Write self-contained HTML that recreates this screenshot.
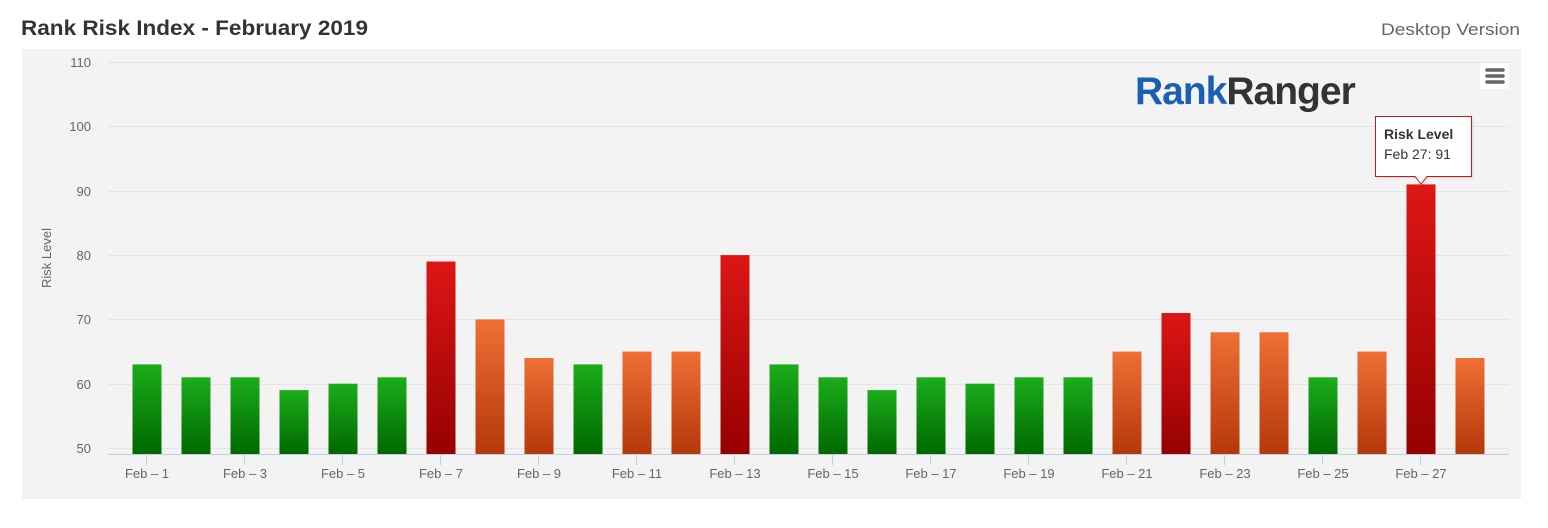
<!DOCTYPE html>
<html><head><meta charset="utf-8"><style>
body{margin:0;background:#fff;width:1548px;height:523px;overflow:hidden;font-family:"Liberation Sans",sans-serif}
</style></head><body>
<svg width="1548" height="523" xmlns="http://www.w3.org/2000/svg" font-family="Liberation Sans, sans-serif">
<defs>
<linearGradient id="g" x1="0" y1="0" x2="0" y2="1"><stop offset="0" stop-color="#1bad1b"/><stop offset="1" stop-color="#006800"/></linearGradient>
<linearGradient id="o" x1="0" y1="0" x2="0" y2="1"><stop offset="0" stop-color="#ef6f35"/><stop offset="1" stop-color="#b5380a"/></linearGradient>
<linearGradient id="r" x1="0" y1="0" x2="0" y2="1"><stop offset="0" stop-color="#de1616"/><stop offset="1" stop-color="#960000"/></linearGradient>
</defs>
<text x="21" y="35" font-size="21" font-weight="bold" fill="#333" textLength="347" lengthAdjust="spacingAndGlyphs">Rank Risk Index - February 2019</text>
<text x="1381" y="35" font-size="17" fill="#666" textLength="139" lengthAdjust="spacingAndGlyphs">Desktop Version</text>
<rect x="22" y="49" width="1499" height="450" fill="#f3f3f3"/>
<g stroke="#e4e4e4" stroke-width="1">
<line x1="108" x2="1509" y1="62.5" y2="62.5"/><line x1="108" x2="1509" y1="126.5" y2="126.5"/>
<line x1="108" x2="1509" y1="191.5" y2="191.5"/><line x1="108" x2="1509" y1="255.5" y2="255.5"/>
<line x1="108" x2="1509" y1="319.5" y2="319.5"/><line x1="108" x2="1509" y1="384.5" y2="384.5"/>
<line x1="108" x2="1509" y1="448.5" y2="448.5"/>
</g>
<g font-size="13" fill="#666" text-anchor="end">
<text x="91" y="67">110</text><text x="91" y="131">100</text><text x="91" y="196">90</text>
<text x="91" y="260">80</text><text x="91" y="324">70</text><text x="91" y="389">60</text><text x="91" y="453">50</text>
</g>
<text transform="translate(51,258) rotate(-90)" font-size="13" fill="#666" text-anchor="middle">Risk Level</text>
<g>
<rect x="132.5" y="364.4" width="29" height="89.6" fill="url(#g)"/>
<rect x="181.5" y="377.3" width="29" height="76.7" fill="url(#g)"/>
<rect x="230.5" y="377.3" width="29" height="76.7" fill="url(#g)"/>
<rect x="279.5" y="390.1" width="29" height="63.9" fill="url(#g)"/>
<rect x="328.5" y="383.7" width="29" height="70.3" fill="url(#g)"/>
<rect x="377.5" y="377.3" width="29" height="76.7" fill="url(#g)"/>
<rect x="426.5" y="261.5" width="29" height="192.5" fill="url(#r)"/>
<rect x="475.5" y="319.4" width="29" height="134.6" fill="url(#o)"/>
<rect x="524.5" y="358.0" width="29" height="96" fill="url(#o)"/>
<rect x="573.5" y="364.4" width="29" height="89.6" fill="url(#g)"/>
<rect x="622.5" y="351.6" width="29" height="102.4" fill="url(#o)"/>
<rect x="671.5" y="351.6" width="29" height="102.4" fill="url(#o)"/>
<rect x="720.5" y="255.1" width="29" height="198.9" fill="url(#r)"/>
<rect x="769.5" y="364.4" width="29" height="89.6" fill="url(#g)"/>
<rect x="818.5" y="377.3" width="29" height="76.7" fill="url(#g)"/>
<rect x="867.5" y="390.1" width="29" height="63.9" fill="url(#g)"/>
<rect x="916.5" y="377.3" width="29" height="76.7" fill="url(#g)"/>
<rect x="965.5" y="383.7" width="29" height="70.3" fill="url(#g)"/>
<rect x="1014.5" y="377.3" width="29" height="76.7" fill="url(#g)"/>
<rect x="1063.5" y="377.3" width="29" height="76.7" fill="url(#g)"/>
<rect x="1112.5" y="351.6" width="29" height="102.4" fill="url(#o)"/>
<rect x="1161.5" y="313.0" width="29" height="141" fill="url(#r)"/>
<rect x="1210.5" y="332.3" width="29" height="121.7" fill="url(#o)"/>
<rect x="1259.5" y="332.3" width="29" height="121.7" fill="url(#o)"/>
<rect x="1308.5" y="377.3" width="29" height="76.7" fill="url(#g)"/>
<rect x="1357.5" y="351.6" width="29" height="102.4" fill="url(#o)"/>
<rect x="1406.5" y="184.4" width="29" height="269.6" fill="url(#r)"/>
<rect x="1455.5" y="358.0" width="29" height="96" fill="url(#o)"/>
</g>
<line x1="108" x2="1509" y1="454.5" y2="454.5" stroke="#c0d0e0"/>
<g stroke="#c0d0e0">
<line x1="146.5" x2="146.5" y1="455" y2="465"/><line x1="244.5" x2="244.5" y1="455" y2="465"/>
<line x1="342.5" x2="342.5" y1="455" y2="465"/><line x1="440.5" x2="440.5" y1="455" y2="465"/>
<line x1="538.5" x2="538.5" y1="455" y2="465"/><line x1="636.5" x2="636.5" y1="455" y2="465"/>
<line x1="734.5" x2="734.5" y1="455" y2="465"/><line x1="832.5" x2="832.5" y1="455" y2="465"/>
<line x1="930.5" x2="930.5" y1="455" y2="465"/><line x1="1028.5" x2="1028.5" y1="455" y2="465"/>
<line x1="1126.5" x2="1126.5" y1="455" y2="465"/><line x1="1224.5" x2="1224.5" y1="455" y2="465"/>
<line x1="1322.5" x2="1322.5" y1="455" y2="465"/><line x1="1420.5" x2="1420.5" y1="455" y2="465"/>
</g>
<g font-size="13" fill="#666" text-anchor="middle">
<text x="147" y="478">Feb – 1</text><text x="245" y="478">Feb – 3</text><text x="343" y="478">Feb – 5</text>
<text x="441" y="478">Feb – 7</text><text x="539" y="478">Feb – 9</text><text x="637" y="478">Feb – 11</text>
<text x="735" y="478">Feb – 13</text><text x="833" y="478">Feb – 15</text><text x="931" y="478">Feb – 17</text>
<text x="1029" y="478">Feb – 19</text><text x="1127" y="478">Feb – 21</text><text x="1225" y="478">Feb – 23</text>
<text x="1323" y="478">Feb – 25</text><text x="1421" y="478">Feb – 27</text>
</g>
<text x="1135" y="104" font-size="39" font-weight="bold" letter-spacing="-1"><tspan fill="#1a5fb4">Rank</tspan><tspan fill="#333">Ranger</tspan></text>
<rect x="1480" y="63" width="29" height="26" fill="#fff"/>
<g stroke="#666" stroke-width="3.5" stroke-linecap="round"><line x1="1487" x2="1503" y1="70" y2="70"/><line x1="1487" x2="1503" y1="76" y2="76"/><line x1="1487" x2="1503" y1="82" y2="82"/></g>
<path d="M1377.5 118.5 H1473.5 V178.5 H1429 L1423 186 L1417 178.5 H1377.5 Z" fill="#000" opacity="0.08"/>
<path d="M1375.5 116.5 H1471.5 V176.5 H1427 L1421 184 L1415 176.5 H1375.5 Z" fill="#fff" stroke="#c41a1a" stroke-width="1"/>
<text x="1384" y="139" font-size="14" font-weight="bold" fill="#333">Risk Level</text>
<text x="1384" y="159" font-size="14" fill="#333">Feb 27: 91</text>
</svg>
</body></html>
